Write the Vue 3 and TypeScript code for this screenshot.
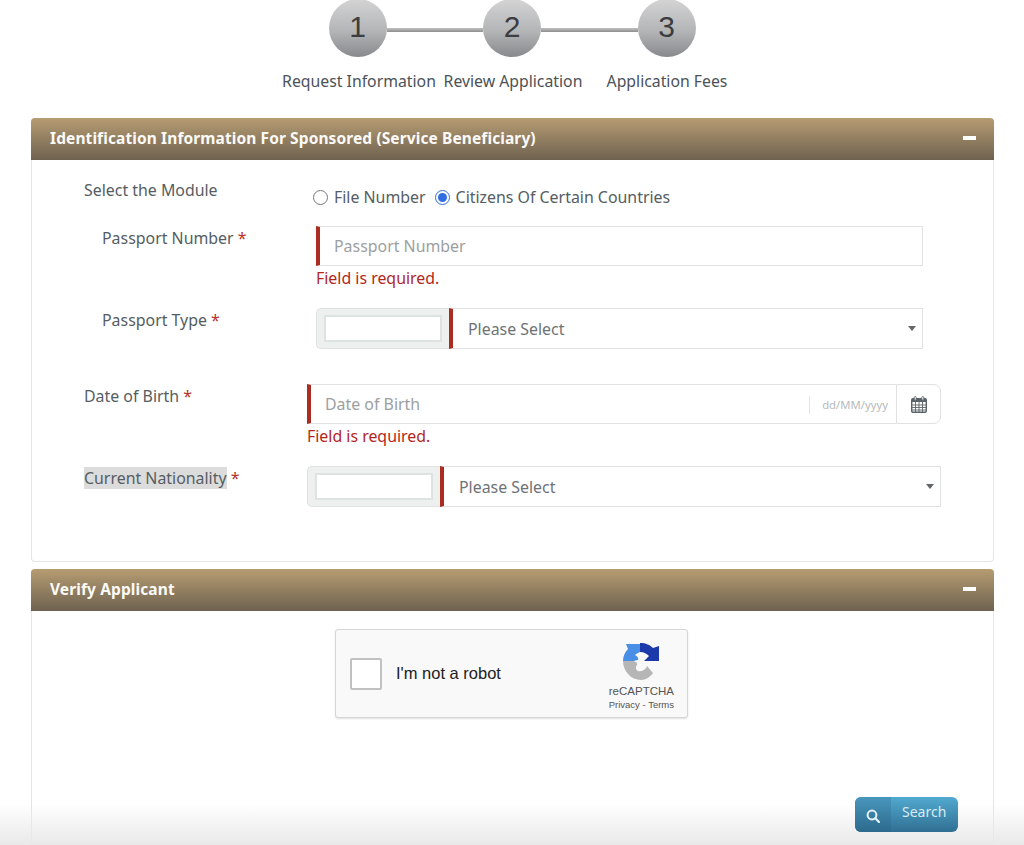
<script setup lang="ts">
import { ref } from 'vue'

const steps = ['Request Information', 'Review Application', 'Application Fees']
const moduleType = ref('citizens')
const identOpen = ref(true)
const verifyOpen = ref(true)
</script>

<template>
  <div class="page">
    <!-- Stepper -->
    <div class="stepper">
      <template v-for="(step, i) in steps" :key="step">
        <div v-if="i > 0" class="step-line"></div>
        <div class="step-circle">{{ i + 1 }}</div>
      </template>
    </div>
    <div class="step-labels">
      <div v-for="step in steps" :key="step" class="step-label">{{ step }}</div>
    </div>

    <!-- Identification -->
    <section class="panel">
      <header class="panel-head">
        <h2>Identification Information For Sponsored (Service Beneficiary)</h2>
        <button type="button" class="collapse" aria-label="Collapse" @click="identOpen = !identOpen"></button>
      </header>
      <div v-if="identOpen" class="panel-body form-body">
        <div class="row row-wide module-row">
          <label class="field-label">Select the Module</label>
          <div class="radios">
            <label class="radio"><input v-model="moduleType" type="radio" value="file" />File Number</label>
            <label class="radio"><input v-model="moduleType" type="radio" value="citizens" />Citizens Of Certain Countries</label>
          </div>
        </div>

        <div class="row row-narrow after-error">
          <label class="field-label">Passport Number <span class="req">*</span></label>
          <div class="control">
            <input class="text-input" type="text" placeholder="Passport Number" />
            <div class="error">Field is required.</div>
          </div>
        </div>

        <div class="row row-narrow after-select">
          <label class="field-label">Passport Type <span class="req">*</span></label>
          <div class="control select-group">
            <div class="code-box"><input type="text" aria-label="Code" /></div>
            <div class="select-wrap">
              <select><option>Please Select</option></select>
              <span class="caret"></span>
            </div>
          </div>
        </div>

        <div class="row row-wide after-error">
          <label class="field-label">Date of Birth <span class="req">*</span></label>
          <div class="control">
            <div class="date-group">
              <input class="date-input" type="text" placeholder="Date of Birth" />
              <span class="date-format">dd/MM/yyyy</span>
              <button type="button" class="date-btn" aria-label="Open calendar">
                <svg width="16" height="17" viewBox="0 0 16 17">
                  <rect x="0.7" y="2.7" width="14.6" height="13.6" rx="1.2" fill="#fff" stroke="#5c6368" stroke-width="1.4" />
                  <rect x="1" y="3" width="14" height="3" fill="#5c6368" />
                  <path d="M1 9h14M1 11.5h14M1 14h14M4.5 6v10M8 6v10M11.5 6v10" stroke="#5c6368" stroke-width="0.9" fill="none" />
                  <rect x="3.2" y="0.6" width="2" height="3.6" rx="1" fill="#fff" stroke="#5c6368" stroke-width="0.9" />
                  <rect x="10.8" y="0.6" width="2" height="3.6" rx="1" fill="#fff" stroke="#5c6368" stroke-width="0.9" />
                </svg>
              </button>
            </div>
            <div class="error">Field is required.</div>
          </div>
        </div>

        <div class="row row-wide">
          <label class="field-label"><span class="highlighted">Current Nationality</span> <span class="req">*</span></label>
          <div class="control select-group">
            <div class="code-box"><input type="text" aria-label="Code" /></div>
            <div class="select-wrap">
              <select><option>Please Select</option></select>
              <span class="caret"></span>
            </div>
          </div>
        </div>
      </div>
    </section>

    <!-- Verify -->
    <section class="panel verify">
      <header class="panel-head">
        <h2>Verify Applicant</h2>
        <button type="button" class="collapse" aria-label="Collapse" @click="verifyOpen = !verifyOpen"></button>
      </header>
      <div v-if="verifyOpen" class="panel-body verify-body">
        <div class="captcha">
          <span class="captcha-box"></span>
          <span class="captcha-text">I'm not a robot</span>
          <div class="captcha-brand">
            <svg width="37" height="37" viewBox="0 0 37 37">
              <path d="M0 18H11C13 19 15 20 14 22C12 24 13 27 15 28C19 29 21 27 23 25L24 23L30 30C27 34 23 37 18 37C8 37 0 28 0 18Z" fill="#b6b6b6" />
              <path d="M0 18C0 13 2 9 5 6L3 1H17V9C15 10 13 11 12 12C14 13 16 15 15 17C13 17 11 18 11 18Z" fill="#4a8fe6" />
              <path d="M17 0C23 0 27 2 30 5L36 3V18H21L26 13C24 11 21 9 17 9Z" fill="#1c3aa9" />
            </svg>
            <span class="brand-name">reCAPTCHA</span>
            <span class="brand-links">Privacy - Terms</span>
          </div>
        </div>
        <div class="actions">
          <button type="button" class="search-btn">
            <span class="search-icon">
              <svg width="14" height="14" viewBox="0 0 14 14">
                <circle cx="6" cy="6" r="4.4" fill="none" stroke="#e8f3f8" stroke-width="2" />
                <path d="M9.3 9.3L13 13" stroke="#e8f3f8" stroke-width="2.2" stroke-linecap="round" />
              </svg>
            </span>
            <span class="search-text">Search</span>
          </button>
        </div>
      </div>
    </section>

    <div class="bottom-fade"></div>
  </div>
</template>

<style>
html,
body {
  margin: 0;
  background: #fff;
  overflow: hidden;
}
</style>

<style scoped>
.page {
  position: relative;
  height: 845px;
  overflow: hidden;
  padding: 0 30px 0 31px;
  box-sizing: border-box;
  background: #fff;
  font-family: 'Noto Sans', 'Open Sans', sans-serif;
  font-size: 15.9px;
  color: #555d63;
}

/* stepper */
.stepper {
  display: flex;
  justify-content: center;
  align-items: center;
  margin: -1px 1px 0 0;
}

.step-circle {
  width: 58px;
  height: 58px;
  flex: none;
  box-sizing: border-box;
  padding-bottom: 3px;
  border-radius: 50%;
  background: linear-gradient(#d4d4d5, #b4b5b7 55%, #87898c);
  display: flex;
  align-items: center;
  justify-content: center;
  font-family: 'Liberation Sans', sans-serif;
  font-size: 30px;
  color: #3c3d40;
}

.step-line {
  width: 96.5px;
  height: 4px;
  margin-top: 3px;
  background: linear-gradient(#c2c2c2, #8e8e8e);
}

.step-labels {
  display: grid;
  grid-template-columns: repeat(3, 154px);
  justify-content: center;
  margin: 12px 0 0 1px;
}

.step-label {
  text-align: center;
  white-space: nowrap;
  line-height: 24px;
  font-size: 15.8px;
  color: #4c5257;
}

/* panels */
.panel {
  margin-top: 25px;
  border: 1px solid #e4e6e6;
  border-top: none;
  border-radius: 4px;
  background: #fff;
}

.panel.verify {
  margin-top: 7px;
}

.panel-head {
  height: 42px;
  box-sizing: border-box;
  padding: 0 18px 2px 19px;
  display: flex;
  align-items: center;
  justify-content: space-between;
  background: linear-gradient(#b69c72, #6e6250);
  border-radius: 4px 4px 0 0;
  margin: 0 -1px;
}

.panel-head h2 {
  margin: 0;
  font-size: 15.5px;
  font-weight: 700;
  color: #fbfaf7;
  letter-spacing: 0.1px;
}

.collapse {
  width: 13px;
  height: 4px;
  padding: 0;
  border: none;
  background: #fff;
  cursor: pointer;
}

.form-body {
  padding: 18px 0 54px;
}

.row {
  display: flex;
  align-items: flex-start;
}

.row-wide {
  padding-left: 52px;
}

.row-wide .field-label {
  width: 223px;
}

.row-wide .control {
  width: 634px;
}

.row-narrow {
  padding-left: 70px;
}

.row-narrow .field-label {
  width: 214px;
}

.row-narrow .control {
  width: 607px;
}

.module-row {
  margin-bottom: 17px;
}

.module-row .field-label {
  width: 229px;
}

.after-error {
  margin-bottom: 18px;
}

.after-select {
  margin-bottom: 35px;
}

.field-label {
  flex: none;
  line-height: 24px;
}

.highlighted {
  background: #dcdcdc;
}

.req {
  color: #b8322a;
}

.radios {
  display: flex;
  gap: 9px;
  margin-top: 7px;
}

.radio {
  display: flex;
  align-items: center;
  line-height: 24px;
}

.radio input {
  width: 15px;
  height: 15px;
  margin: 1px 6px 0 0;
  accent-color: #2f6fe0;
}

.text-input,
.date-input {
  box-sizing: border-box;
  width: 100%;
  height: 40px;
  padding: 0 14px;
  border: 1px solid #e0e2e2;
  border-left: 4px solid #ab2d22;
  outline: none;
  font: inherit;
  color: inherit;
}

input::placeholder {
  color: #9c9fa1;
  opacity: 1;
}

.error {
  line-height: 24px;
  color: #b3261c;
}

.select-group {
  display: flex;
  height: 41px;
}

.code-box {
  flex: none;
  width: 133px;
  box-sizing: border-box;
  padding: 6px 7px;
  background: #eef0f0;
  border: 1px solid #e0e2e2;
  border-right: none;
  border-radius: 5px 0 0 5px;
}

.code-box input {
  display: block;
  box-sizing: border-box;
  width: 100%;
  height: 100%;
  padding: 0 6px;
  border: 2px solid #dde2e2;
  background: #fff;
  outline: none;
}

.select-wrap {
  position: relative;
  flex: 1;
}

.select-wrap select {
  width: 100%;
  height: 100%;
  box-sizing: border-box;
  appearance: none;
  padding: 0 15px;
  border: 1px solid #e0e2e2;
  border-left: 4px solid #ab2d22;
  border-radius: 0;
  background: #fff;
  outline: none;
  font: inherit;
  color: #6f7376;
}

.caret {
  position: absolute;
  right: 7px;
  top: 18px;
  border: 4.5px solid transparent;
  border-top: 5px solid #62666a;
  border-bottom: none;
  pointer-events: none;
}

.date-group {
  position: relative;
  display: flex;
  height: 40px;
}

.date-input {
  flex: 1;
  min-width: 0;
  border-right: none;
  padding-right: 100px;
}

.date-format {
  position: absolute;
  right: 45px;
  top: 12px;
  height: 18px;
  padding: 0 8px 0 12px;
  border-left: 1px solid #e4e4e4;
  font-size: 11.3px;
  line-height: 18px;
  color: #b7babc;
}

.date-btn {
  flex: none;
  width: 45px;
  padding: 0;
  display: flex;
  align-items: center;
  justify-content: center;
  background: #fff;
  border: 1px solid #e0e2e2;
  border-radius: 0 7px 7px 0;
}

/* captcha */
.verify-body {
  padding: 18px 0 40px;
}

.captcha {
  position: relative;
  width: 353px;
  height: 89px;
  margin-left: 303px;
  box-sizing: border-box;
  display: flex;
  align-items: center;
  background: #f9f9f9;
  border: 1px solid #d6d6d6;
  border-radius: 3px;
  box-shadow: 0 1px 2px rgba(0, 0, 0, 0.12);
  font-family: 'Liberation Sans', sans-serif;
}

.captcha-box {
  width: 32px;
  height: 32px;
  margin-left: 14px;
  box-sizing: border-box;
  background: #fff;
  border: 2px solid #c1c1c1;
  border-radius: 2px;
}

.captcha-text {
  margin-left: 14px;
  font-size: 16.5px;
  color: #222;
}

.captcha-brand {
  position: absolute;
  right: 13px;
  top: 13px;
  display: flex;
  flex-direction: column;
  align-items: center;
  color: #555;
}

.brand-name {
  margin-top: 4px;
  font-size: 11.5px;
  line-height: 14px;
}

.brand-links {
  font-size: 9.5px;
  line-height: 13px;
}

.actions {
  display: flex;
  justify-content: flex-end;
  margin-top: 79px;
  padding-right: 35px;
}

.search-btn {
  position: relative;
  z-index: 2;
  display: flex;
  width: 103px;
  height: 35px;
  padding: 0;
  border: none;
  border-radius: 6px;
  overflow: hidden;
  background: linear-gradient(#52a9d0, #306f93);
  font: inherit;
  cursor: pointer;
}

.search-icon {
  width: 36px;
  display: flex;
  align-items: center;
  justify-content: center;
  padding-top: 3px;
  box-sizing: border-box;
  background: linear-gradient(#4996bd, #2c6a8d);
}

.search-text {
  margin-left: 11px;
  font-size: 14px;
  line-height: 30px;
  color: #d6ecf5;
}

.bottom-fade {
  position: absolute;
  left: 0;
  right: 0;
  bottom: 0;
  height: 42px;
  background: linear-gradient(rgba(232, 232, 232, 0), #e9e9e9);
  pointer-events: none;
}
</style>
